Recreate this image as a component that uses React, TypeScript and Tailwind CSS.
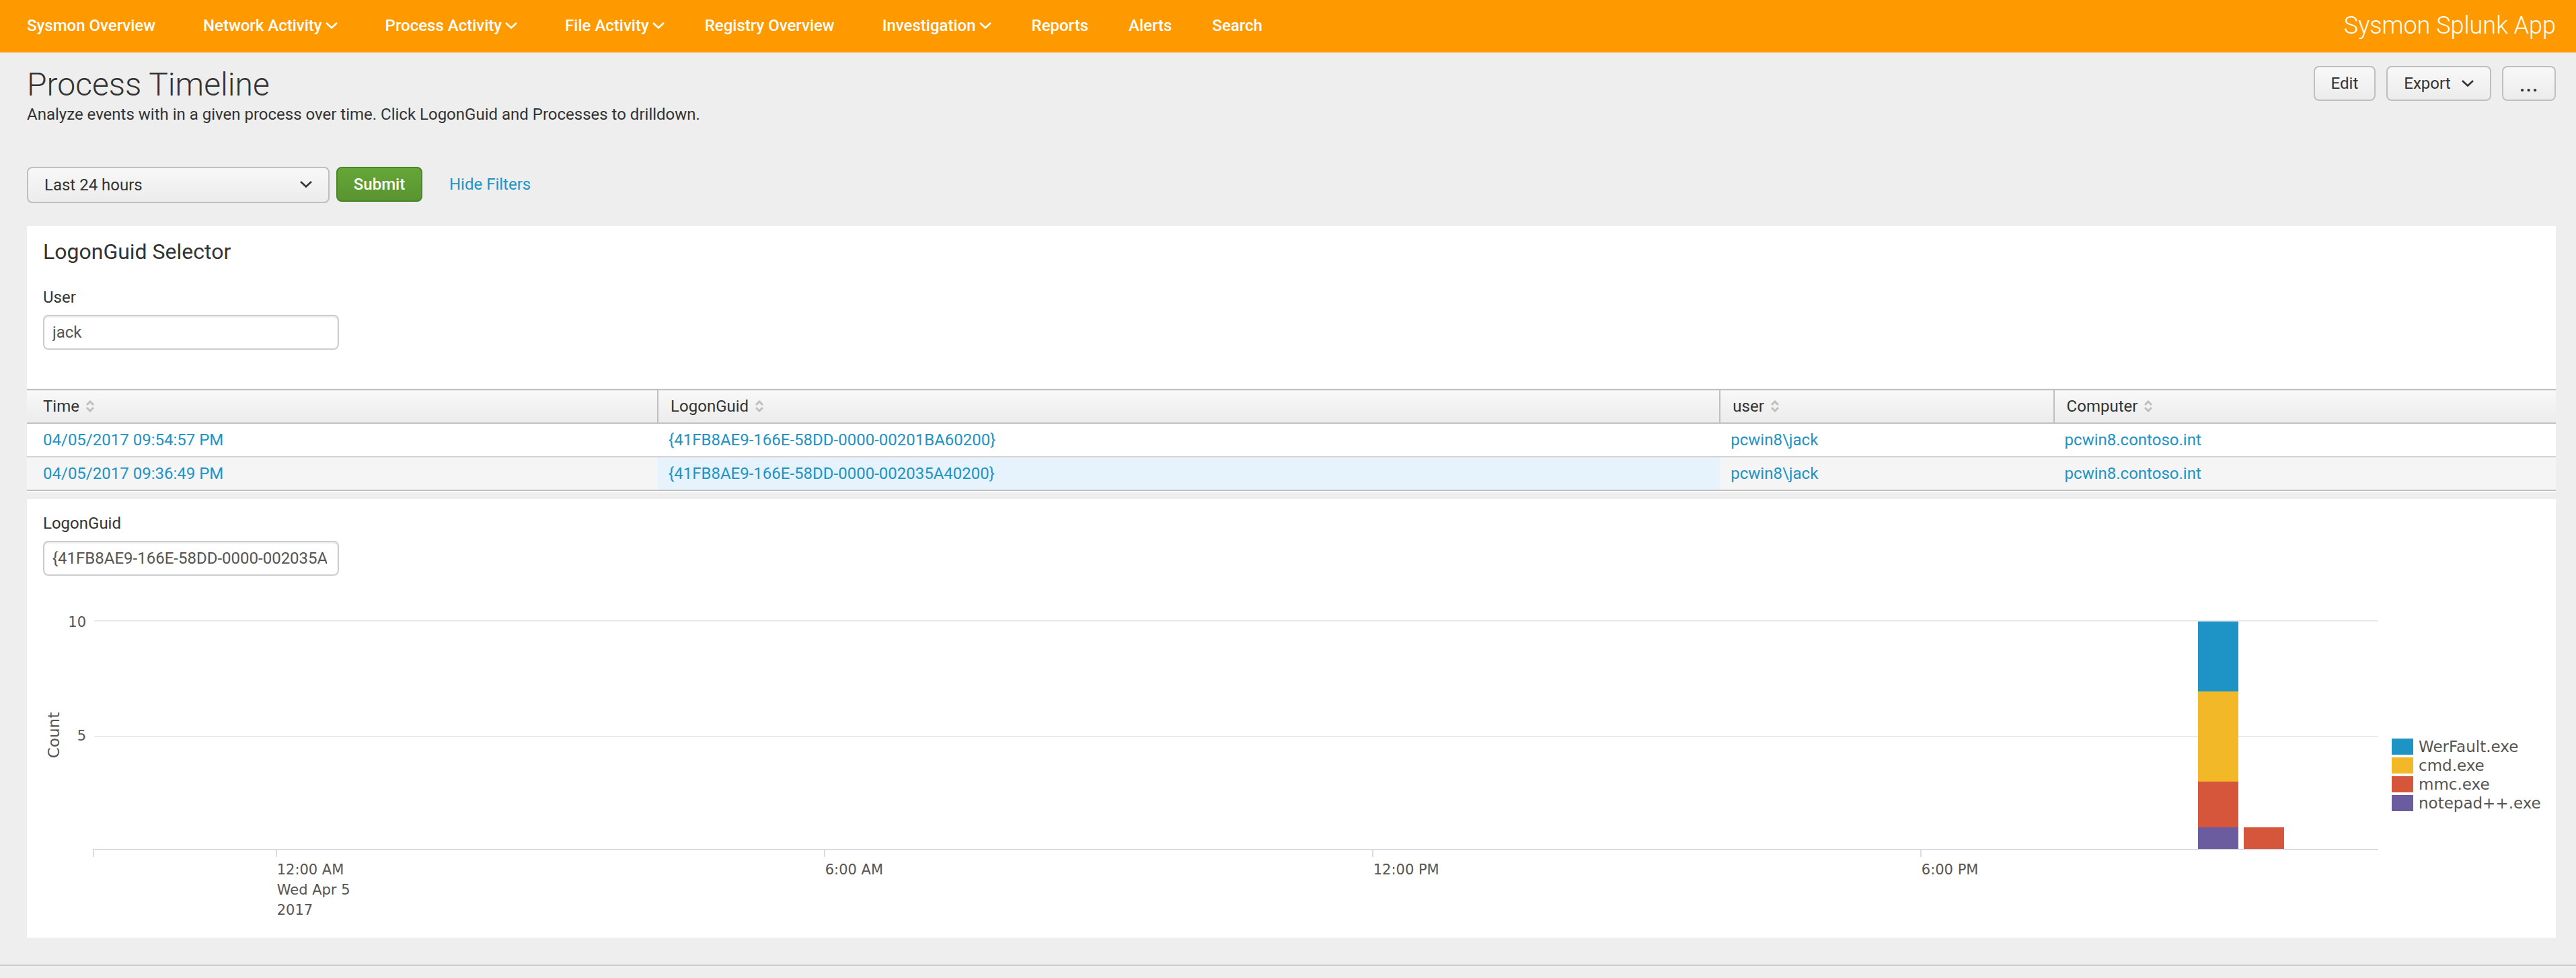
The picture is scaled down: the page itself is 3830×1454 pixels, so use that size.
import { useState } from "react"

const links = [
  { name: "Sysmon Overview", menu: false },
  { name: "Network Activity", menu: true },
  { name: "Process Activity", menu: true },
  { name: "File Activity", menu: true },
  { name: "Registry Overview", menu: false },
  { name: "Investigation", menu: true },
  { name: "Reports", menu: false },
  { name: "Alerts", menu: false },
  { name: "Search", menu: false },
]

const columns = ["Time", "LogonGuid", "user", "Computer"]

const rows = [
  ["04/05/2017 09:54:57 PM", "{41FB8AE9-166E-58DD-0000-00201BA60200}", "pcwin8\\jack", "pcwin8.contoso.int"],
  ["04/05/2017 09:36:49 PM", "{41FB8AE9-166E-58DD-0000-002035A40200}", "pcwin8\\jack", "pcwin8.contoso.int"],
]

const legend = [
  { name: "WerFault.exe", color: "#1e93c6" },
  { name: "cmd.exe", color: "#f2b827" },
  { name: "mmc.exe", color: "#d6563c" },
  { name: "notepad++.exe", color: "#6a5c9e" },
]

// the axis runs from 10 PM to 11 PM the next day
const HOURS = 25
const at = (hour: number) => `${(hour / HOURS) * 100}%`

const ticks = [
  { hour: 2, lines: ["12:00 AM", "Wed Apr 5", "2017"] },
  { hour: 8, lines: ["6:00 AM"] },
  { hour: 14, lines: ["12:00 PM"] },
  { hour: 20, lines: ["6:00 PM"] },
]

const bars = [
  { hour: 23, y: 24, height: 104, color: "#1e93c6" },
  { hour: 23, y: 128, height: 134, color: "#f2b827" },
  { hour: 23, y: 262, height: 68, color: "#d6563c" },
  { hour: 23, y: 330, height: 32, color: "#6a5c9e" },
  { hour: 23.5, y: 330, height: 32, color: "#d6563c" },
]

const Chevron = () => (
  <svg viewBox="0 0 18 12" className="w-[18px] h-3 shrink-0" fill="none" stroke="currentColor" strokeWidth="2.6">
    <path d="M1 2 L9 9.5 L17 2" />
  </svg>
)

const Sort = () => (
  <svg viewBox="0 0 12 18" className="w-3 h-[18px] shrink-0" fill="none" stroke="#bfbfbf" strokeWidth="3">
    <path d="M1 7 L6 2 L11 7 M1 11 L6 16 L11 11" />
  </svg>
)

const button = "flex items-center h-[52px] px-6 rounded-lg border-2 border-[#bfbfbf] bg-linear-to-b from-[#f8f8f8] to-[#ececec]"
const field = "block w-[440px] h-[52px] pl-3 pr-4 rounded-lg border-2 border-[#ccc] bg-white text-[#555] shadow-[inset_0_2px_2px_rgba(0,0,0,0.08)]"

const Chart = () => (
  <div className="flex mt-11 font-['DejaVu_Sans',sans-serif] text-[21px]">
    <svg className="w-[100px] h-[494px] shrink-0" fill="#555">
      <text x="88" y="32" textAnchor="end">10</text>
      <text x="88" y="201" textAnchor="end">5</text>
      <text x="48" y="193" textAnchor="middle" fontSize="23" transform="rotate(-90 48 193)">Count</text>
    </svg>
    <svg className="flex-1 min-w-0 h-[494px] overflow-visible" fill="#555">
      <g strokeWidth="2" shapeRendering="crispEdges">
        <line x1="0" x2="100%" y1="23" y2="23" stroke="#ebebeb" />
        <line x1="0" x2="100%" y1="195" y2="195" stroke="#ebebeb" />
        <line x1="-2" x2="100%" y1="363" y2="363" stroke="#d9dce3" />
        <g stroke="#d9dce3" transform="translate(-1)">
          <line x1="0" x2="0" y1="364" y2="374" />
          {ticks.map((tick) => (
            <line key={tick.hour} x1={at(tick.hour)} x2={at(tick.hour)} y1="364" y2="374" />
          ))}
        </g>
      </g>
      {ticks.map((tick) => (
        <svg key={tick.hour} x={at(tick.hour)} className="overflow-visible">
          {tick.lines.map((line, i) => (
            <text key={line} x="0" y={400 + i * 30}>{line}</text>
          ))}
        </svg>
      ))}
      {bars.map((bar) => (
        <svg key={`${bar.hour}-${bar.y}`} x={at(bar.hour)} className="overflow-visible">
          <rect x="4" y={bar.y} width="60" height={bar.height} fill={bar.color} shapeRendering="crispEdges" />
        </svg>
      ))}
    </svg>
    <ul className="flex flex-col gap-1 w-[264px] pl-5 pt-[198px] shrink-0 text-[23px] text-[#555]">
      {legend.map((item) => (
        <li key={item.name} className="flex items-center gap-2 h-6">
          <span className="w-8 h-6" style={{ backgroundColor: item.color }} />
          {item.name}
        </li>
      ))}
    </ul>
  </div>
)

const App = () => {
  const [user, setUser] = useState("jack")
  const [guid, setGuid] = useState("{41FB8AE9-166E-58DD-0000-002035A40200}")
  const [filters, setFilters] = useState(true)

  return (
    <div className="min-h-screen bg-[#eee] font-[Roboto,sans-serif] text-2xl leading-8 text-[#333]">
      <header className="flex items-center justify-between h-[78px] pb-0.5 pr-[30px] pl-10 bg-[#ff9900] text-white">
        <nav className="flex items-center gap-[60px] font-medium">
          {links.map((link) => (
            <a key={link.name} href="#" className={`flex items-center gap-[5px] ${link.menu ? "pl-[11px]" : ""}`}>
              {link.name}
              {link.menu && <Chevron />}
            </a>
          ))}
        </nav>
        <span className="text-4xl font-light">Sysmon Splunk App</span>
      </header>

      <main className="pr-[30px] pl-10 pb-10">
        <div className="flex justify-between items-start pt-5">
          <div>
            <h1 className="text-5xl leading-[56px] font-light">Process Timeline</h1>
            <p>Analyze events with in a given process over time. Click LogonGuid and Processes to drilldown.</p>
          </div>
          <div className="flex gap-4">
            <button className={button}>Edit</button>
            <button className={`${button} gap-4`}>Export <Chevron /></button>
            <button className={`${button} text-4xl`}>...</button>
          </div>
        </div>

        <form className="flex items-start h-[88px] mt-[62px]" onSubmit={(e) => e.preventDefault()}>
          <div className="relative">
            <select aria-label="Time range" className="appearance-none w-[450px] h-[54px] px-6 rounded-lg border-2 border-[#bfbfbf] bg-linear-to-b from-[#f8f8f8] to-[#ececec]">
              <option>Last 24 hours</option>
            </select>
            <span className="absolute right-[26px] top-5 pointer-events-none"><Chevron /></span>
          </div>
          <button className="h-[52px] w-32 ml-2.5 rounded-lg border-2 border-[#4a8527] bg-linear-to-b from-[#65a637] to-[#5a9431] text-white font-medium">Submit</button>
          <a href="#" className="ml-10 mt-2.5 text-[#1e93c6]" onClick={() => setFilters(!filters)}>{filters ? "Hide Filters" : "Show Filters"}</a>
        </form>

        <section className="bg-white pb-0.5">
          <div className="px-6 pt-[18px] pb-[58px]">
            <h2 className="text-[32px] leading-10">LogonGuid Selector</h2>
            <label htmlFor="user" className="block mt-8 mb-2.5">User</label>
            <input id="user" className={field} value={user} onChange={(e) => setUser(e.target.value)} />
          </div>
          <table className="w-full table-fixed border-collapse">
            <colgroup>
              <col className="w-[24.95%]" />
              <col className="w-[42%]" />
              <col className="w-[13.2%]" />
              <col />
            </colgroup>
            <thead>
              <tr className="h-[50px] border-y-2 border-[#bfbfbf] bg-linear-to-b from-[#f8f8f8] to-[#ececec]">
                {columns.map((column, i) => (
                  <th key={column} className={`p-0 text-left font-normal ${i === 0 ? "pl-6" : "pl-[18px] border-l-2 border-[#bfbfbf]"}`}>
                    <span className="flex items-center gap-2.5">{column}<Sort /></span>
                  </th>
                ))}
              </tr>
            </thead>
            <tbody>
              {rows.map((row, r) => (
                <tr key={row[0]} className={`h-[50px] border-b-2 text-[#1e93c6] ${r === 1 ? "bg-[#f5f5f5] border-[#bfbfbf]" : "border-[#d4d4d4]"}`}>
                  {row.map((cell, i) => (
                    <td key={i} className={`p-0 ${i === 0 ? "pl-6" : "pl-4"} ${r === 1 && i === 1 ? "bg-[#e6f3fd]" : ""}`}>
                      <a href="#">{cell}</a>
                    </td>
                  ))}
                </tr>
              ))}
            </tbody>
          </table>
        </section>

        <section className="mt-2.5 bg-white">
          <div className="px-6 pt-5">
            <label htmlFor="guid" className="block mb-2.5">LogonGuid</label>
            <input id="guid" className={field} value={guid} onChange={(e) => setGuid(e.target.value)} />
          </div>
          <Chart />
        </section>
      </main>

      <footer className="border-t-2 border-[#ccc]" />
    </div>
  )
}

export default App
